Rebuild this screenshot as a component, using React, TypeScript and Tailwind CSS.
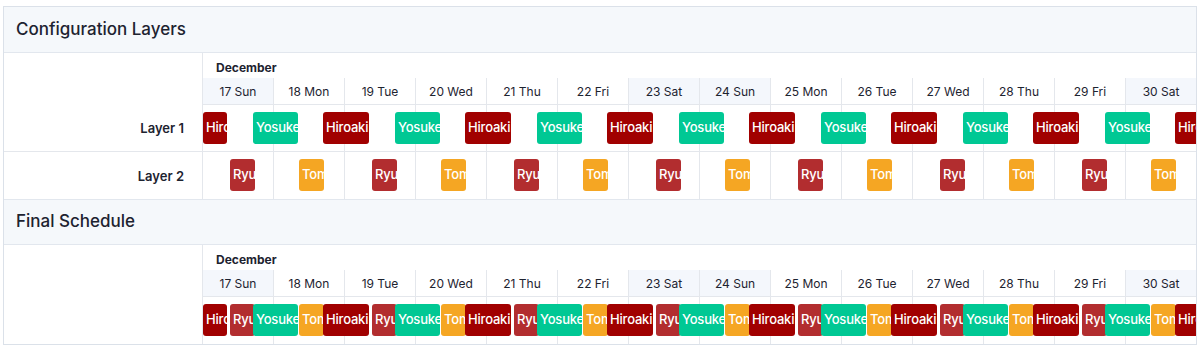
import React from 'react';

const days = [
  { label: '17 Sun', weekend: true },
  { label: '18 Mon', weekend: false },
  { label: '19 Tue', weekend: false },
  { label: '20 Wed', weekend: false },
  { label: '21 Thu', weekend: false },
  { label: '22 Fri', weekend: false },
  { label: '23 Sat', weekend: true },
  { label: '24 Sun', weekend: true },
  { label: '25 Mon', weekend: false },
  { label: '26 Tue', weekend: false },
  { label: '27 Wed', weekend: false },
  { label: '28 Thu', weekend: false },
  { label: '29 Fri', weekend: false },
  { label: '30 Sat', weekend: true },
];

type Shift = { name: string; start: number; width: number; color: string };

const PERIOD = 142;

const people: Record<string, { start: number; width: number; color: string }> = {
  Hiroaki: { start: -22, width: 46, color: 'bg-[#a10000]' },
  Ryu: { start: 27, width: 25, color: 'bg-[#b22d2f]' },
  Yosuke: { start: 50, width: 45, color: 'bg-[#00c894]' },
  Tom: { start: 96, width: 25, color: 'bg-[#f5a623]' },
};

// shifts that begin before the 17th are cut at the left edge of the track
function shiftsFor(names: string[]): Shift[] {
  const out: Shift[] = [];
  for (let k = 0; k < 8; k++) {
    names.forEach((name) => {
      const p = people[name];
      const start = p.start + k * PERIOD;
      const left = Math.max(start, 0);
      out.push({ name, start: left, width: p.width - (left - start), color: p.color });
    });
  }
  return out.sort((a, b) => a.start - b.start);
}

function Block({ shift }: { shift: Shift }) {
  return (
    <div
      className={`absolute top-[7px] h-[32px] rounded-[3px] overflow-hidden whitespace-nowrap pl-[3px] flex items-center text-[13px] font-medium tracking-[-0.2px] text-white ${shift.color}`}
      style={{ left: shift.start, width: shift.width }}
    >
      {shift.name}
    </div>
  );
}

function DayGrid() {
  return (
    <div className="absolute inset-0 flex">
      {days.map((d) => (
        <div key={d.label} className="w-[71px] shrink-0 h-full border-r border-[#e4e7ec]" />
      ))}
    </div>
  );
}

function TrackRow({ names, last }: { names: string[]; last?: boolean }) {
  return (
    <div className={`relative h-[47px] ${last ? '' : 'border-b border-[#e4e7ec]'}`}>
      <DayGrid />
      {shiftsFor(names).map((s, i) => (
        <Block key={i} shift={s} />
      ))}
    </div>
  );
}

function Section({
  title,
  rows,
  first,
}: {
  title: string;
  rows: { label: string; names: string[] }[];
  first?: boolean;
}) {
  return (
    <div>
      <div
        className={`h-[46px] flex items-center px-[12px] bg-[#f5f8fb] border-b border-[#e2e7ee] ${
          first ? '' : 'border-t'
        }`}
      >
        <h2 className="text-[17px] font-medium text-[#1d2330]">{title}</h2>
      </div>
      <div className="flex">
        {/* labels */}
        <div className="w-[199px] shrink-0 border-r border-[#e4e7ec]">
          <div className="h-[52px]" />
          {rows.map((r, i) => (
            <div
              key={r.label}
              className={`h-[47px] flex items-center justify-end pr-[18px] pt-[2px] text-[13px] font-semibold text-[#1d2330] ${
                i < rows.length - 1 ? 'border-b border-[#e4e7ec]' : ''
              }`}
            >
              {r.label}
            </div>
          ))}
        </div>

        {/* timeline */}
        <div className="flex-1 overflow-hidden">
          <div className="h-[25px] flex items-end pl-[13px] pb-[1px] text-[12px] font-bold text-[#1d2330]">
            December
          </div>
          <div className="flex h-[27px] border-b border-[#e4e7ec]">
            {days.map((d) => (
              <div
                key={d.label}
                className={`w-[71px] shrink-0 flex items-center justify-center pt-[2px] border-r border-[#e4e7ec] text-[12px] text-[#1d2330] ${
                  d.weekend ? 'bg-[#f4f7fc]' : ''
                }`}
              >
                {d.label}
              </div>
            ))}
          </div>
          {rows.map((r, i) => (
            <TrackRow key={r.label} names={r.names} last={i === rows.length - 1} />
          ))}
        </div>
      </div>
    </div>
  );
}

export default function App() {
  return (
    <div className="w-[1200px] h-[350px] bg-white pt-[6px] font-['Inter',sans-serif]">
      <div className="mx-[3px] border border-[#dbe1e9]">
        <Section
          first
          title="Configuration Layers"
          rows={[
            { label: 'Layer 1', names: ['Hiroaki', 'Yosuke'] },
            { label: 'Layer 2', names: ['Ryu', 'Tom'] },
          ]}
        />
        <Section
          title="Final Schedule"
          rows={[{ label: '', names: ['Hiroaki', 'Ryu', 'Yosuke', 'Tom'] }]}
        />
      </div>
    </div>
  );
}
